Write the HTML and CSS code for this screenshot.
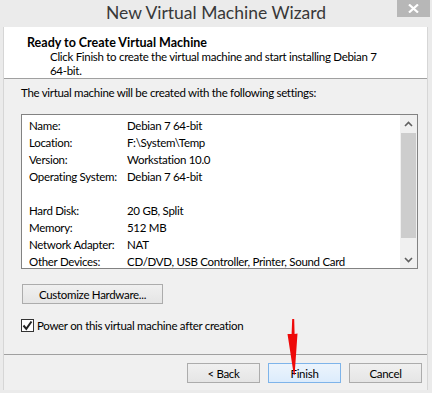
FILE: index.html
```html
<!DOCTYPE html>
<html lang="en">

<head>
  <meta charset="UTF-8">
  <title>New Virtual Machine Wizard</title>
  <link rel="stylesheet" href="styles.css">
</head>

<body>
  <div class="window">
    <div class="titlebar">
      <div class="title">New Virtual Machine Wizard</div>
      <div class="close">
        <svg width="11" height="9" viewBox="0 0 11 9">
          <path d="M1 0.5 L10 8.5 M10 0.5 L1 8.5" stroke="#fff" stroke-width="2.2" />
        </svg>
      </div>
    </div>

    <div class="client">
      <div class="header">
        <div class="header-title">Ready to Create Virtual Machine</div>
        <div class="header-desc">
          Click Finish to create the virtual machine and start installing Debian 7<br>64-bit.
        </div>
      </div>

      <div class="content">
        <p class="intro">The virtual machine will be created with the following settings:</p>

        <div class="listbox">
          <div class="rows">
            <div class="row"><span class="label">Name:</span><span>Debian 7 64-bit</span></div>
            <div class="row"><span class="label">Location:</span><span>F:\System\Temp</span></div>
            <div class="row"><span class="label">Version:</span><span>Workstation 10.0</span></div>
            <div class="row"><span class="label">Operating System:</span><span>Debian 7 64-bit</span></div>
            <div class="row"></div>
            <div class="row"><span class="label">Hard Disk:</span><span>20 GB, Split</span></div>
            <div class="row"><span class="label">Memory:</span><span>512 MB</span></div>
            <div class="row"><span class="label">Network Adapter:</span><span>NAT</span></div>
            <div class="row"><span class="label">Other Devices:</span><span>CD/DVD, USB Controller, Printer, Sound Card</span></div>
          </div>
          <div class="scrollbar">
            <div class="arrow">
              <svg width="9" height="6" viewBox="0 0 9 6"><path d="M1 5 L4.5 1.5 L8 5" fill="none" stroke="#606060" stroke-width="1.6" /></svg>
            </div>
            <div class="track"><div class="thumb"></div></div>
            <div class="arrow">
              <svg width="9" height="6" viewBox="0 0 9 6"><path d="M1 1 L4.5 4.5 L8 1" fill="none" stroke="#606060" stroke-width="1.6" /></svg>
            </div>
          </div>
        </div>

        <button class="btn btn-customize">Customize Hardware...</button>

        <label class="check">
          <span class="box">
            <svg width="11" height="11" viewBox="0 0 11 11"><path d="M1.5 5.5 L4.3 8.8 L9.5 1.5" fill="none" stroke="#222" stroke-width="2" /></svg>
          </span>
          Power on this virtual machine after creation
        </label>
      </div>

      <div class="footer">
        <button class="btn">&lt; Back</button>
        <button class="btn btn-default">Finish</button>
        <button class="btn">Cancel</button>
      </div>
    </div>

    <svg class="red-arrow" width="20" height="62" viewBox="0 0 20 62">
      <path d="M8.2 0 L10.2 0 L10.6 15 L13.5 14.5 L10.6 56 L9.8 56 L3.5 15 L7.6 15 Z" fill="#ee0a0a" />
    </svg>
  </div>
</body>

</html>
```

FILE: styles.css
```css
:root {
  --frame: #ebebeb;
  --panel: #f0f0f0;
  --text: #000;
  --line: #a0a0a0;
  --btn-border: #acacac;
}

* {
  box-sizing: border-box;
}

body {
  margin: 0;
  background: var(--frame);
  font-family: Lato, "Noto Sans", sans-serif;
  font-size: 11.5px;
  letter-spacing: -0.3px;
  color: var(--text);
}

.window {
  position: relative;
  width: 432px;
  height: 393px;
  background: var(--frame);
}

.titlebar {
  display: flex;
  height: 27px;
  padding-left: 35px;
  padding-right: 2px;
}

.title {
  flex: 1;
  text-align: center;
  font-size: 17.5px;
  letter-spacing: 0;
  line-height: 25px;
  color: #383838;
}

.close {
  width: 33px;
  height: 17px;
  background: #b7b7b7;
  display: flex;
  align-items: center;
  justify-content: center;
}

.client {
  margin: 0 4px 0 3px;
  height: 363px;
  border-left: 1px solid #d6d6d6;
  border-right: 1px solid #d6d6d6;
  background: var(--panel);
  display: flex;
  flex-direction: column;
}

.header {
  height: 52px;
  background: #fff;
  border-bottom: 1px solid var(--line);
  padding: 8px 0 0 23px;
}

.header-title {
  font-weight: bold;
  font-size: 12.5px;
  letter-spacing: 0;
  line-height: 15px;
}

.header-desc {
  padding-left: 23px;
  line-height: 14px;
}

.content {
  height: 276px;
  padding: 6px 0 0 17px;
  border-bottom: 1px solid var(--line);
}

.intro {
  margin: 0;
  line-height: 15px;
}

.listbox {
  display: flex;
  width: 397px;
  height: 155px;
  margin-top: 14px;
  border: 1px solid #828282;
  background: #fff;
}

.rows {
  flex: 1;
  padding: 2px 0 0 7px;
}

.row {
  display: flex;
  height: 17px;
  line-height: 17px;
  white-space: nowrap;
}

.label {
  width: 98px;
}

.scrollbar {
  width: 17px;
  display: flex;
  flex-direction: column;
  background: var(--panel);
}

.arrow {
  height: 17px;
  display: flex;
  align-items: center;
  justify-content: center;
}

.track {
  flex: 1;
  padding: 1px 1px 0;
}

.thumb {
  height: 105px;
  background: #cdcdcd;
}

.btn {
  font: inherit;
  letter-spacing: inherit;
  color: var(--text);
  height: 20px;
  padding: 0;
  border: 1px solid var(--btn-border);
  background: linear-gradient(#f0f0f0, #e5e5e5);
  cursor: pointer;
}

.btn-customize {
  display: block;
  width: 141px;
  margin: 15px 0 0 1px;
}

.btn-default {
  border-color: #7eb4ea;
  background: linear-gradient(#ecf4fc, #dcecfc);
}

.check {
  display: flex;
  align-items: center;
  gap: 3px;
  margin-top: 15px;
  line-height: 13px;
}

.box {
  width: 13px;
  height: 13px;
  border: 1px solid #333;
  background: #fff;
  display: flex;
  align-items: center;
  justify-content: center;
}

.footer {
  display: flex;
  justify-content: flex-end;
  gap: 8px;
  padding: 8px 5px 0 0;
}

.footer .btn {
  width: 73px;
}

.red-arrow {
  position: absolute;
  left: 284px;
  top: 319px;
}
```
